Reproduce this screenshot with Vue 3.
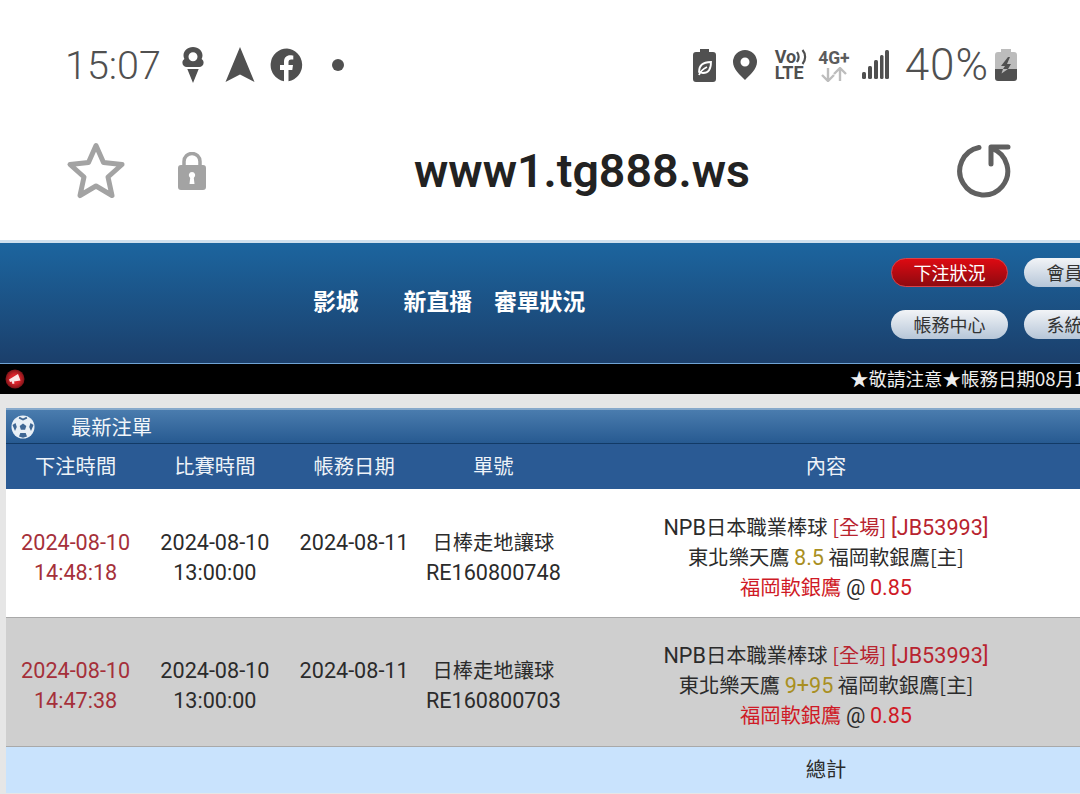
<script setup>
const rows = [
  { bet: ['2024-08-10', '14:48:18'], no: 'RE160800748', line: '8.5', gap: false },
  { bet: ['2024-08-10', '14:47:38'], no: 'RE160800703', line: '9+95', gap: true }
]
const heads = ['下注時間', '比賽時間', '帳務日期', '單號', '內容']
</script>

<template>
  <div class="page">
    <div class="status">
      <div class="side">
        <span class="time">15:07</span>
        <svg class="i" style="margin-left:20px" width="24" height="38" viewBox="0 0 24 38"><path fill="#505050" fill-rule="evenodd" d="M12 1c5.500 0 9.500 3.800 9.500 8.600 0 1.300-.3 2.500-.9 3.500 1.200.8 2 2.100 2 3.600 0 2.500-2 4.300-4.400 4.300H5.800C3.400 21 1.400 19.200 1.400 16.700c0-1.500.8-2.800 2-3.600-.6-1-.9-2.200-.9-3.500C2.500 4.800 6.500 1 12 1zm0 5.200a4.500 4.500 0 1 0 0 9 4.500 4.500 0 0 0 0-9zM6.300 23h11.400L12 37z"/></svg>
        <svg class="i" style="margin-left:20px" width="30" height="36" viewBox="0 0 30 36"><path fill="#505050" d="M15 0 29.500 35 15 27.500.5 35z"/></svg>
        <svg class="i" style="margin-left:15px" width="34" height="34" viewBox="0 0 34 34"><path fill="#505050" d="M17 .5a16.500 16.500 0 0 0-3 32.700V22h-4v-5h4v-3.200c0-4.300 2.500-6.600 6.300-6.600 1.500 0 3 .3 3 .3v4h-2c-2.100 0-2.800 1.300-2.800 2.600V17h4.500l-.7 5h-3.800v11.200A16.500 16.500 0 0 0 17 .5z"/></svg>
        <span class="dot"></span>
      </div>
      <div class="side">
        <svg class="i" width="23" height="33" viewBox="0 0 23 33"><path fill="#505050" d="M7 0h9v3h4a3 3 0 0 1 3 3v24a3 3 0 0 1-3 3H3a3 3 0 0 1-3-3V6a3 3 0 0 1 3-3h4z"/><path fill="none" stroke="#fff" stroke-width="1.800" d="M6 23c0-6 3-10 12-10 0 7-3 11-8 11-1.500 0-3-.5-4-1zm0 3c1.500-4 4-6 8-8"/></svg>
        <svg class="i" style="margin-left:17px" width="24" height="30" viewBox="0 0 24 30"><path fill="#505050" fill-rule="evenodd" d="M12 0a12 12 0 0 1 12 12c0 7-7 13-12 18C7 25 0 19 0 12A12 12 0 0 1 12 0zm0 7.500a4.500 4.500 0 1 0 0 9 4.500 4.500 0 0 0 0-9z"/></svg>
        <div class="volte">
          <span class="vo">Vo<svg width="11" height="16" viewBox="0 0 11 16"><path fill="none" stroke="#505050" stroke-width="2.200" d="M1 3c2 3 2 7 0 10M6.500 1c3.500 4 3.500 10 0 14"/></svg></span>
          <span class="lte">LTE</span>
        </div>
        <div class="net">
          <span class="g">4G+</span>
          <svg width="28" height="15" viewBox="0 0 28 15"><path fill="none" stroke="#bdbdbd" stroke-width="2.400" d="M8 1v12M2 8l6 6 6-6M20 14V2M14 7l6-6 6 6"/></svg>
        </div>
        <svg class="i" style="margin-left:12px" width="27" height="30" viewBox="0 0 27 30"><g fill="#505050"><rect x="0" y="22" width="4" height="7" rx="1.500"/><rect x="6" y="16" width="4" height="13" rx="1.500"/><rect x="12" y="10" width="4" height="19" rx="1.500"/><rect x="18" y="5" width="3.500" height="24" rx="1.500"/><rect x="23" y="0" width="4" height="29" rx="1.500"/></g></svg>
        <span class="pct">40%</span>
        <svg class="i" style="margin-left:6px" width="22" height="32" viewBox="0 0 22 32"><path fill="#bcbcbc" d="M6 0h10v3h3a3 3 0 0 1 3 3v14H0V6a3 3 0 0 1 3-3h3z"/><path fill="#505050" d="M0 20h22v9a3 3 0 0 1-3 3H3a3 3 0 0 1-3-3z"/><path fill="#505050" d="M13 8 6 17h4l-2 3h5l3-5h-4l3-7z"/><path fill="#bcbcbc" d="m8 20-1.500 4.500L13 20z"/></svg>
      </div>
    </div>

    <div class="urlbar">
      <svg width="60" height="58" viewBox="0 0 60 58"><path fill="none" stroke="#a3a3a3" stroke-width="5" stroke-linejoin="round" d="M30 3.500 37.500 20.500 56 22.500 42 35 46 53.500 30 44 14 53.500 18 35 4 22.500 22.500 20.500z"/></svg>
      <svg class="lock" width="28" height="38" viewBox="0 0 28 38"><path fill="none" stroke="#a3a3a3" stroke-width="3.500" d="M6 15V9.500a8 8 0 0 1 16 0V15"/><path fill="#a3a3a3" fill-rule="evenodd" d="M3 13h22a3 3 0 0 1 3 3v19a3 3 0 0 1-3 3H3a3 3 0 0 1-3-3V16a3 3 0 0 1 3-3zm11 7a3.300 3.300 0 0 0-1.800 6L11.500 32h5l-.7-6A3.300 3.300 0 0 0 14 20z"/></svg>
      <span class="url">www1.tg888.ws</span>
      <svg class="reload" width="54" height="54" viewBox="0 0 54 54"><g fill="none" stroke="#606060" stroke-width="5" stroke-linecap="round" stroke-linejoin="round"><path d="M22 3.500A24 24 0 1 0 35 4.500"/><path d="M51 3H34v17"/></g></svg>
    </div>

    <header class="top">
      <nav class="nav">
        <span>影城</span>
        <span class="n2">新直播</span>
        <span class="n3">審單狀況</span>
      </nav>
      <div class="btns">
        <span class="btn on">下注狀況</span>
        <span class="btn">會員資料</span>
        <span class="btn">帳務中心</span>
        <span class="btn">系統公告</span>
      </div>
    </header>

    <div class="ticker">
      <svg class="horn" width="20" height="20" viewBox="0 0 20 20"><defs><radialGradient id="hg"><stop offset="0.500" stop-color="#d8232b"/><stop offset="1" stop-color="#7d1418"/></radialGradient></defs><circle cx="10" cy="10" r="9.500" fill="url(#hg)"/><path fill="#fbe6e6" d="M4 10.500 13 5l2.500 6.500L9 12.500l.5 2-2 .5-.7-2.400L5 13z"/></svg>
      <span class="msg">★敬請注意★帳務日期08月11日</span>
    </div>

    <div class="panel">
      <div class="title">
        <svg width="24" height="24" viewBox="0 0 24 24"><circle cx="12" cy="12" r="11.500" fill="#e9f0f6"/><g fill="#3f6794"><path d="m12 8.500 3.300 2.400-1.200 3.900H9.900l-1.200-3.900z"/><path d="M8.500 1.800 12 3.500l3.500-1.700.8 1.700L12 5.500 7.700 3.500zM1.500 10 4.500 8 5.800 12 4 16zM22.500 10l-3-2L18.200 12l1.800 4zM8 21.500l1.300-3.500h5.400l1.300 3.500-4 1.200z"/></g></svg>
        <span>最新注單</span>
      </div>
      <table class="grid">
        <colgroup>
          <col class="c1"><col class="c1"><col class="c1"><col class="c1"><col>
        </colgroup>
        <thead>
          <tr><th v-for="h in heads" :key="h">{{ h }}</th></tr>
        </thead>
        <tbody>
          <tr v-for="r in rows" :key="r.no" :class="{ alt: r.gap }">
            <td class="red"><span class="l">{{ r.bet[0] }}</span><br><span class="l">{{ r.bet[1] }}</span></td>
            <td><span class="l">2024-08-10</span><br><span class="l">13:00:00</span></td>
            <td><span class="l">2024-08-11</span><br>&nbsp;</td>
            <td>日棒走地讓球<br><span class="l">{{ r.no }}</span></td>
            <td>
              <span class="l">NPB</span>日本職業棒球 <span class="brick">[全場] <span class="l">[JB53993]</span></span><br>
              東北樂天鷹 <span class="l gold">{{ r.line }}</span> 福岡軟銀鷹[主]<br>
              <span class="bright">福岡軟銀鷹</span> <span class="l">@</span> <span class="l bright">0.85</span>
            </td>
          </tr>
          <tr class="sum"><td colspan="4"></td><td>總計</td></tr>
        </tbody>
      </table>
    </div>
  </div>
</template>

<style scoped>
.page {
  width: 1080px;
  height: 794px;
  overflow: hidden;
  background: #fff;
  font-family: "Noto Sans CJK TC", Roboto, sans-serif;
}
.i { flex: none; display: block; }
.status {
  height: 130px;
  padding: 0 63px 0 65px;
  display: flex;
  align-items: center;
  justify-content: space-between;
  box-sizing: border-box;
  color: #505050;
}
.side { display: flex; align-items: center; }
.time { font: 300 39.500px Roboto, sans-serif; }
.dot { width: 12px; height: 12px; border-radius: 50%; background: #505050; margin-left: 28px; }
.volte { margin-left: 18px; display: flex; flex-direction: column; font: 700 18px/16px Roboto, sans-serif; color: #505050; }
.vo { display: flex; align-items: center; }
.lte { font-size: 18px; }
.net { margin-left: 11px; display: flex; flex-direction: column; align-items: center; color: #5c5c5c; }
.g { font: 700 17.500px/18px Roboto, sans-serif; }
.pct { font: 300 44px Roboto, sans-serif; letter-spacing: 1px; margin-left: 16px; }

.urlbar {
  height: 110px;
  padding: 0 0 28px 66px;
  box-sizing: border-box;
  display: flex;
  align-items: center;
}
.lock { margin-left: 52px; }
.url {
  margin-left: 208px;
  width: 335px;
  flex: none;
  font: 600 46.500px Roboto, sans-serif;
  color: #222;
  white-space: nowrap;
}
.reload { margin-left: 208px; }

.top {
  height: 124px;
  box-sizing: border-box;
  border-top: 3px solid #cfe0ee;
  border-bottom: 1px solid #6fa3d4;
  background: linear-gradient(#1c659f, #1b3f6b);
  display: flex;
  align-items: center;
}
.nav {
  width: 891px;
  flex: none;
  padding-left: 313px;
  box-sizing: border-box;
  display: flex;
  color: #fff;
  font-size: 22.800px;
  font-weight: 700;
  margin-top: -5px;
}
.n2 { margin-left: 45px; }
.n3 { margin-left: 22px; }
.btns {
  display: grid;
  grid-template-columns: 117px 117px;
  gap: 23px 16px;
  flex: none;
  margin-top: -10px;
}
.btn {
  height: 29px;
  border-radius: 15px;
  background: linear-gradient(#f2f4f7, #b6c6d8);
  color: #333;
  font-size: 18px;
  line-height: 29px;
  text-align: center;
  white-space: nowrap;
}
.btn.on {
  box-sizing: border-box;
  line-height: 27px;
  border: 1px solid #d9434a;
  background: linear-gradient(#dd0a12, #8e0a10);
  color: #fff;
}

.ticker {
  height: 30px;
  background: #000;
  display: flex;
  align-items: center;
  overflow: hidden;
}
.horn { margin-left: 5px; flex: none; }
.msg {
  margin-left: 825px;
  margin-top: -2px;
  color: #eee;
  font-size: 18.500px;
  white-space: nowrap;
}

.panel {
  background: #e6e6e6;
  padding: 14px 0 0 6px;
  height: 400px;
  box-sizing: border-box;
}
.title {
  height: 36px;
  box-sizing: border-box;
  width: 1083px;
  border-top: 2px solid #87a9cb;
  border-bottom: 1px solid #123a66;
  background: linear-gradient(#4a7cae, #275a91);
  display: flex;
  align-items: center;
  padding: 0 0 2px 5px;
  color: #f2f6fa;
  font-size: 20.300px;
}
.title svg { margin-top: 2px; }
.title span { margin-left: 36px; }
.grid {
  width: 1083px;
  border-collapse: collapse;
  table-layout: fixed;
  font-size: 20.300px;
  line-height: 30px;
  color: #2b2b2b;
  text-align: center;
}
.c1 { width: 139.250px; }
.grid th {
  height: 45px;
  padding: 0 0 4px;
  box-sizing: border-box;
  background: #2a5a94;
  color: #eef3f8;
  font-weight: 400;
  vertical-align: middle;
}
.grid td { padding: 6px 0 0; box-sizing: border-box; height: 128px; background: #fff; border-bottom: 1px solid #a9a9a9; vertical-align: middle; }
.grid tr.alt td { height: 129px; background: #cfcfcf; padding-top: 4px; }
.grid tr.sum td { height: 47px; padding: 0 0 3px; background: #c9e3fd; border: 0; }
.l { font-family: Roboto, sans-serif; font-size: 21.600px; line-height: 1; }
.red { color: #a5303a; }
.brick { color: #b8242f; }
.bright { color: #cf1a26; }
.gold { color: #a98f22; }
</style>

<style>
html, body { margin: 0; overflow: hidden; }
</style>
